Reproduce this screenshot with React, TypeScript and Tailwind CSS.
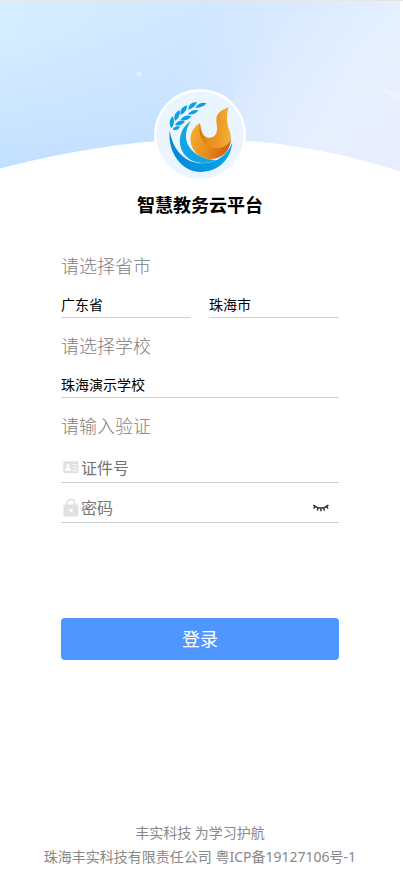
import { useState } from "react";

function HeaderBackdrop() {
  return (
    <svg viewBox="0 0 400 171" preserveAspectRatio="none" className="block h-[171px] w-full" aria-hidden="true">
      <defs>
        <linearGradient id="sky" x1="0" y1="0" x2="1" y2="0.2">
          <stop offset="0" stopColor="#d6eeff" />
          <stop offset="0.5" stopColor="#d2e8ff" />
          <stop offset="0.75" stopColor="#dcebff" />
          <stop offset="1" stopColor="#e5f1ff" />
        </linearGradient>
        <linearGradient id="deep" gradientUnits="userSpaceOnUse" x1="70" y1="30" x2="95" y2="175">
          <stop offset="0" stopColor="#c2e0ff" stopOpacity="0" />
          <stop offset="1" stopColor="#bcdcff" />
        </linearGradient>
        <linearGradient id="fade" x1="0" y1="0" x2="1" y2="0">
          <stop offset="0" stopColor="#fff" />
          <stop offset="0.45" stopColor="#fff" stopOpacity="0.7" />
          <stop offset="0.7" stopColor="#fff" stopOpacity="0" />
        </linearGradient>
        <mask id="deepMask">
          <rect width="400" height="171" fill="url(#fade)" />
        </mask>
        <linearGradient id="ray" gradientUnits="userSpaceOnUse" x1="235" y1="90" x2="330" y2="120">
          <stop offset="0" stopColor="#deeaff" stopOpacity="0.6" />
          <stop offset="1" stopColor="#e5efff" stopOpacity="0.9" />
        </linearGradient>
        <linearGradient id="rayFade" x1="0" y1="0" x2="0" y2="1">
          <stop offset="0" stopColor="#fff" stopOpacity="0" />
          <stop offset="0.6" stopColor="#fff" />
        </linearGradient>
        <mask id="rayMask">
          <rect width="400" height="171" fill="url(#rayFade)" />
        </mask>
        <linearGradient id="violet" x1="0" y1="0" x2="0.3" y2="1">
          <stop offset="0" stopColor="#e4f2ff" />
          <stop offset="0.6" stopColor="#eaf1ff" />
          <stop offset="1" stopColor="#ebedff" />
        </linearGradient>
        <radialGradient id="spark">
          <stop offset="0" stopColor="#fff" stopOpacity="0.6" />
          <stop offset="1" stopColor="#fff" stopOpacity="0" />
        </radialGradient>
        <clipPath id="hillClip">
          <path d="M0 0H400V170.500C345 152 272 138 204 138C140 138 66 150 0 167.500Z" />
        </clipPath>
      </defs>
      <g clipPath="url(#hillClip)">
        <rect width="400" height="171" fill="url(#sky)" />
        <rect width="400" height="171" fill="url(#deep)" mask="url(#deepMask)" />
        <g mask="url(#rayMask)">
          <path d="M275 0C268 35 250 72 231 100V171H400V0Z" fill="url(#ray)" />
          <path d="M357 0C354 60 335 110 305 150L400 171V0Z" fill="url(#violet)" opacity="0.6" />
        </g>
        <circle cx="139" cy="73" r="4" fill="url(#spark)" />
        <path d="M376 84Q389 90 400 93V98Q388 93 376 84Z" fill="#fff" opacity="0.35" />
      </g>
    </svg>
  );
}

function Logo() {
  return (
    <svg viewBox="27 27 276 276" className="size-[92px]" role="img" aria-label="智慧教务云平台">
      <defs>
        <linearGradient id="flame" x1="0" y1="0" x2="1" y2="0">
          <stop offset="0" stopColor="#dc7414" />
          <stop offset="0.3" stopColor="#e88f20" />
          <stop offset="0.65" stopColor="#eb9c28" />
          <stop offset="1" stopColor="#f4b335" />
        </linearGradient>
        <linearGradient id="bowl" x1="0" y1="0" x2="1" y2="0.3">
          <stop offset="0" stopColor="#f6b232" />
          <stop offset="0.5" stopColor="#ea9420" />
          <stop offset="1" stopColor="#d4620f" />
        </linearGradient>
        <linearGradient id="wave" x1="0" y1="0" x2="1" y2="0">
          <stop offset="0" stopColor="#0787d3" />
          <stop offset="1" stopColor="#05a5ec" />
        </linearGradient>
      </defs>
      <circle cx="165" cy="165" r="138" fill="#fff" />
      <circle cx="165" cy="166" r="131" fill="#eaf5ff" />
      <g fill="#0b9fe4">
        <path d="M185 70C172 65 157 71 151 84C164 84 176 80 185 70Z" />
        <path d="M156 67C142 64 130 73 130 89C143 86 151 78 156 67Z" />
        <path d="M127 76C113 79 103 90 107 105C120 99 126 89 127 76Z" />
        <path d="M104 91C91 96 84 109 90 123C102 115 106 103 104 91Z" />
        <path d="M83 109C73 118 71 132 79 145C88 134 89 121 83 109Z" />
        <path d="M160 91C147 87 136 93 129 103C142 106 153 101 160 91Z" />
        <path d="M139 108C125 103 113 109 107 119C120 124 132 119 139 108Z" />
        <path d="M120 123C107 119 95 124 90 135C102 139 114 134 120 123Z" />
        <path d="M105 140C94 137 86 141 83 149C92 152 101 149 105 140Z" />
      </g>
      <path
        d="M74 151C67 217 110 276 166 276C220 276 257 239 262 187C249 225 215 248 176 250C126 252 84 217 74 151Z"
        fill="url(#wave)"
      />
      <path
        d="M137 123C92 155 96 214 136 239C160 253 190 251 214 240C160 240 93 195 137 123Z"
        fill="#11a5e4"
      />
      <path
        d="M165 129C142 141 131 169 139 195C148 223 173 238 200 237C233 236 255 213 258 178L225 196C190 194 169 172 165 129Z"
        fill="url(#bowl)"
      />
      <path
        d="M165 129C157 174 181 205 214 205C238 205 256 192 258 172C257 155 247 142 246 120C245 107 247 95 251 82C225 92 213 101 214 122C215 136 219 149 213 161C206 174 190 177 180 169C170 160 166 148 165 129Z"
        fill="url(#flame)"
      />
    </svg>
  );
}

function IdCardIcon() {
  return (
    <svg viewBox="0 0 48 48" className="size-4" aria-hidden="true">
      <rect x="1" y="4" width="45" height="36" rx="4" fill="#e1e1e1" />
      <circle cx="15" cy="17" r="5" fill="#fff" />
      <path d="M6 32C6 25 10 22 15 22S24 25 24 32Z" fill="#fff" />
      <path d="M29 14H42M29 23H42M29 32H42" stroke="#fff" strokeWidth="2.500" />
    </svg>
  );
}

function LockIcon() {
  return (
    <svg viewBox="0 0 48 56" className="h-[19px] w-4" aria-hidden="true">
      <path d="M12 24V15C12 -0.500 35 -0.500 35 15V24" fill="none" stroke="#e1e1e1" strokeWidth="5" />
      <rect x="1" y="19" width="45" height="36" rx="4" fill="#e1e1e1" />
      <circle cx="24" cy="37" r="5" fill="#fff" />
    </svg>
  );
}

function ClosedEyeIcon() {
  return (
    <svg viewBox="0 0 48 24" className="h-2 w-4" fill="none" stroke="#333" aria-hidden="true">
      <path d="M1 3C12 15 35 15 46 3" strokeWidth="5" />
      <path d="M6 8L2 14M15 12L13 20M24 13V22M32 12L34 20M41 8L45 14" strokeWidth="4.500" />
    </svg>
  );
}

const labelClass = "block text-lg/7 font-light text-[#808080]";
const selectClass =
  "block h-[25px] w-full appearance-none rounded-none border-b border-[#d0d0d0] bg-transparent text-sm text-black outline-none";
const fieldClass = "flex h-[30px] items-center border-b border-[#c9d0d0] pl-0.5";
const inputClass =
  "ml-0.5 h-6 min-w-0 flex-1 bg-transparent text-base text-black outline-none placeholder:text-[#757575]";

export default function App() {
  const [visible, setVisible] = useState(false);

  return (
    <div className="flex min-h-screen flex-col border-t border-[#e4e6e8] bg-white font-['Noto_Sans','Noto_Sans_CJK_SC',sans-serif]">
      <div className="flex flex-1 flex-col pr-[3px]">
        <header className="flex flex-col items-center">
          <HeaderBackdrop />
          <div className="relative -mt-[83px]">
            <Logo />
          </div>
          <h1 className="mt-2.5 text-lg/7 font-bold text-black">智慧教务云平台</h1>
        </header>

        <form className="mt-[33px] px-[61px]" onSubmit={(e) => e.preventDefault()}>
          <label htmlFor="province" className={labelClass}>请选择省市</label>
          <div className="mt-[13px] grid grid-cols-2 gap-[18px]">
            <select id="province" className={selectClass}>
              <option>广东省</option>
            </select>
            <select id="city" aria-label="市" className={selectClass}>
              <option>珠海市</option>
            </select>
          </div>

          <label htmlFor="school" className={`mt-3.5 ${labelClass}`}>请选择学校</label>
          <div className="mt-[13px]">
            <select id="school" className={selectClass}>
              <option>珠海演示学校</option>
            </select>
          </div>

          <label htmlFor="account" className={`mt-3.5 ${labelClass}`}>请输入验证</label>
          <div className={`mt-[13px] ${fieldClass}`}>
            <IdCardIcon />
            <input id="account" type="text" placeholder="证件号" className={inputClass} />
          </div>
          <div className={`mt-2.5 ${fieldClass}`}>
            <LockIcon />
            <input
              id="password"
              aria-label="密码"
              type={visible ? "text" : "password"}
              placeholder="密码"
              className={inputClass}
            />
            <button type="button" aria-label="显示密码" className="mr-2.5" onClick={() => setVisible(!visible)}>
              <ClosedEyeIcon />
            </button>
          </div>

          <button type="submit" className="mt-[95px] block h-[42px] w-full rounded bg-[#5096ff] text-lg text-white">
            登录
          </button>
        </form>

        <footer className="mt-auto pt-8 pb-1.5 text-center text-sm/6 text-[#888]">
          <p>丰实科技 为学习护航</p>
          <p>珠海丰实科技有限责任公司 粤ICP备19127106号-1</p>
        </footer>
      </div>
    </div>
  );
}
